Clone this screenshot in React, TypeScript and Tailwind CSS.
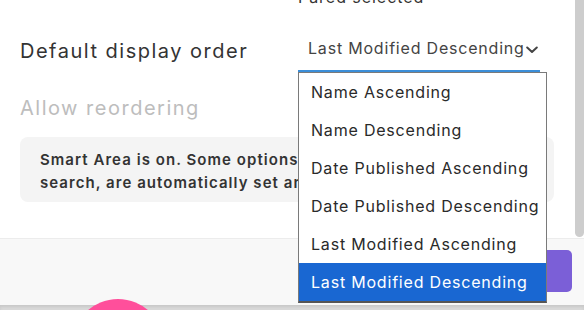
import React from "react";

const font = { fontFamily: "Inter, 'Noto Sans', sans-serif" };

const options = [
  "Name Ascending",
  "Name Descending",
  "Date Published Ascending",
  "Date Published Descending",
  "Last Modified Ascending",
  "Last Modified Descending",
];

export default function App() {
  return (
    <div
      className="relative w-[584px] h-[310px] overflow-hidden bg-[#d9d9d9] flex flex-col tracking-[0.06em]"
      style={font}
    >
      {/* Content area */}
      <div className="flex h-[238px] bg-white">
        <div className="w-[575px] h-full overflow-hidden pl-[20px]">
          <div className="ml-[278px] -mt-[13px] h-[20px] leading-[20px] text-[16px] text-[#333] whitespace-nowrap">
            Pared selected
          </div>
          <div className="mt-[23px] flex items-center">
            <div className="w-[278px] text-[20px] leading-[28px] text-[#333] tracking-[0.075em]">
              Default display order
            </div>
            <div className="w-[242px] pt-[6px] pb-[10px] pl-[10px] border-b-2 border-[#3b8ed8] flex items-center">
              <span className="text-[16px] leading-[24px] text-[#444] whitespace-nowrap tracking-[0.05em]">
                Last Modified Descending
              </span>
              <svg width="12" height="8" viewBox="0 0 12 8" className="mt-[3px] ml-[1px]">
                <path d="M1.2 1.5 L6 6 L10.8 1.5" fill="none" stroke="#444" strokeWidth="2" strokeLinecap="round" strokeLinejoin="round" />
              </svg>
            </div>
          </div>
          <div className="mt-[22px] text-[20px] leading-[28px] text-[#bdbdbd] tracking-[0.075em]">
            Allow reordering
          </div>
          <div className="mt-[15px] mr-[21px] bg-[#f4f4f4] rounded-[8px] pl-[20px] pt-[11px] pb-[8px] text-[15px] leading-[23px] font-semibold text-[#333] whitespace-nowrap overflow-hidden tracking-[0.07em]">
            Smart Area is on. Some options, such as sorting and
            <br />
            search, are automatically set and can't be changed.
          </div>
        </div>
        <div className="w-[9px] h-full">
          <div className="w-[9px] h-[237px] bg-[#cdcdcd] rounded-b-[5px]" />
        </div>
      </div>

      {/* Footer */}
      <div className="h-[67px] bg-[#f8f8f8] border-t border-[#ececec] flex justify-end pt-[11px] pr-[12px]">
        <div className="w-[120px] h-[42px] bg-[#7b5fd7] rounded-[5px]" />
      </div>

      {/* Bottom strip */}
      <div className="flex-1 bg-[#d9d9d9] shadow-[inset_0_2px_3px_rgba(0,0,0,0.08)]" />

      {/* Pink circle */}
      <div className="absolute left-[72px] top-[299px] w-[92px] h-[92px] rounded-full bg-[#ff4f9b]" />

      {/* Dropdown list */}
      <div className="absolute left-[298px] top-[72px] w-[249px] bg-white border border-[#7a7a7a] border-b-2 border-b-[#555] tracking-[0.05em]">
        {options.map((o, i) => {
          const selected = i === options.length - 1;
          return (
            <div
              key={o}
              className={
                selected
                  ? "h-[38px] pl-[12px] flex items-center text-[16px] text-white bg-[#1967d2] whitespace-nowrap"
                  : "h-[38px] pl-[12px] flex items-center text-[16px] text-[#2a2a2a] whitespace-nowrap"
              }
            >
              {o}
            </div>
          );
        })}
      </div>
    </div>
  );
}
